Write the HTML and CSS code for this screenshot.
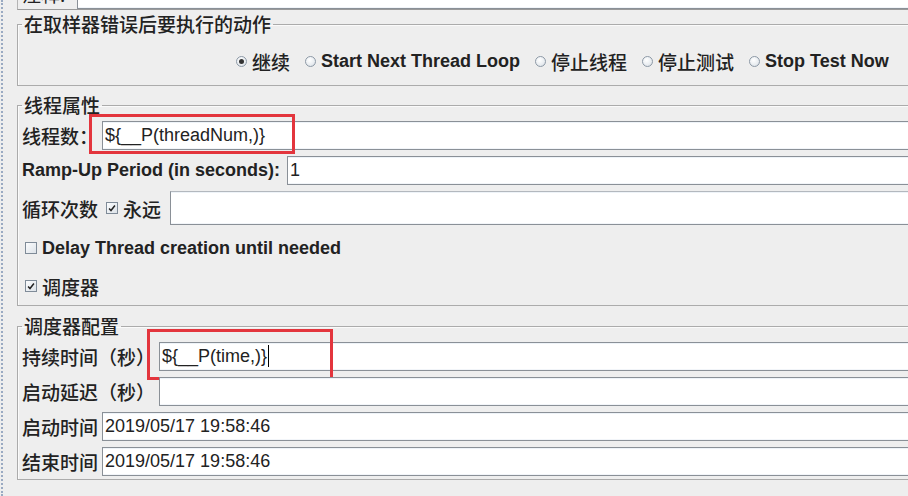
FILE: index.html
```html
<!DOCTYPE html>
<html>
<head>
    <meta charset="utf-8">
    <title>线程组</title>
    <link rel="stylesheet" href="styles.css">
</head>
<body>
    <div class="frame">
        <div class="content">
            <div class="comment-row">
                <span class="comment-label">注释:</span>
                <div class="field comment-field"></div>
            </div>

            <fieldset class="group group-error">
                <legend>在取样器错误后要执行的动作</legend>
                <div class="radio-row">
                    <label class="radio-item"><span class="radio checked"></span><span class="cjk">继续</span></label>
                    <label class="radio-item"><span class="radio"></span><b>Start Next Thread Loop</b></label>
                    <label class="radio-item"><span class="radio"></span><span class="cjk">停止线程</span></label>
                    <label class="radio-item"><span class="radio"></span><span class="cjk">停止测试</span></label>
                    <label class="radio-item"><span class="radio"></span><b>Stop Test Now</b></label>
                </div>
            </fieldset>

            <fieldset class="group group-thread">
                <legend>线程属性</legend>
                <div class="form-row">
                    <span class="cjk">线程数：</span>
                    <div class="field">${__P(threadNum,)}</div>
                    <span class="mark mark-threads"></span>
                </div>
                <div class="form-row ramp-row">
                    <b>Ramp-Up Period (in seconds):</b>
                    <div class="field">1</div>
                </div>
                <div class="form-row loop-row">
                    <span class="cjk loop-label">循环次数</span>
                    <span class="checkbox checked"><svg viewBox="0 0 12 12"><path d="M2.5 6.5 L4.8 9 L9.5 3"/></svg></span>
                    <span class="cjk forever">永远</span>
                    <div class="field tall"></div>
                </div>
                <div class="check-row delay-row">
                    <span class="checkbox"></span>
                    <b>Delay Thread creation until needed</b>
                </div>
                <div class="check-row scheduler-row">
                    <span class="checkbox checked"><svg viewBox="0 0 12 12"><path d="M2.5 6.5 L4.8 9 L9.5 3"/></svg></span>
                    <span class="cjk">调度器</span>
                </div>
            </fieldset>

            <fieldset class="group group-schedule">
                <legend>调度器配置</legend>
                <div class="form-row">
                    <span class="cjk">持续时间（秒）</span>
                    <div class="field">${__P(time,)}<span class="caret"></span></div>
                    <span class="mark mark-time"></span>
                </div>
                <div class="form-row">
                    <span class="cjk">启动延迟（秒）</span>
                    <div class="field"></div>
                </div>
                <div class="form-row">
                    <span class="cjk">启动时间</span>
                    <div class="field">2019/05/17 19:58:46</div>
                </div>
                <div class="form-row">
                    <span class="cjk">结束时间</span>
                    <div class="field">2019/05/17 19:58:46</div>
                </div>
            </fieldset>
        </div>
    </div>
</body>
</html>
```

FILE: styles.css
```css
* {
    box-sizing: border-box;
}

body {
    margin: 0;
    height: 496px;
    overflow: hidden;
    background: #eeeeee;
    color: #222;
    font-family: 'Liberation Sans', 'Noto Sans CJK SC', sans-serif;
    font-size: 18px;
}

.frame {
    margin-left: 1px;
    min-height: 496px;
    border-left: 2px dotted #9aaac2;
}

.content {
    width: 1000px;
    padding-left: 14px;
}

.cjk,
legend {
    font-family: 'Noto Sans CJK SC', sans-serif;
    font-size: 19px;
    font-weight: 500;
}

b {
    font-weight: 700;
}

/* top comment row, scrolled mostly out of view */
.comment-row {
    display: flex;
    align-items: flex-end;
    height: 10px;
    overflow: hidden;
    border-left: 1px solid #b4b4b4;
    border-bottom: 1px solid #9a9a9a;
}

.comment-label {
    font-family: 'Noto Sans CJK SC', sans-serif;
    font-size: 19px;
    line-height: 22px;
    margin: 0 0 -1px 4px;
    width: 55px;
    flex-shrink: 0;
    align-self: flex-start;
    margin-top: -17px;
}

.comment-field {
    flex: 1;
    height: 30px;
    border-bottom: none;
}

/* titled borders */
.group {
    margin: 0;
    min-width: 0;
    border: 1px solid #ababab;
    box-shadow: inset 1px 1px 0 #fafafa;
    padding: 0 0 0 4px;
}

legend {
    padding: 0 2px;
    line-height: 22px;
    color: #222;
}

.group-error {
    margin-top: 3px;
    padding-top: 15px;
    padding-bottom: 13px;
}

.group-thread {
    margin-top: 8px;
    padding-top: 5px;
    padding-bottom: 8px;
}

.group-schedule {
    margin-top: 9px;
    padding-top: 5px;
    padding-bottom: 3px;
}

/* radio buttons */
.radio-row {
    display: flex;
    align-items: center;
    gap: 15px;
    height: 22px;
    margin-left: 214px;
}

.radio-item {
    display: flex;
    align-items: center;
    gap: 5px;
    white-space: nowrap;
}

.radio {
    width: 11px;
    height: 11px;
    border-radius: 50%;
    border: 1px solid #8d99a6;
    background: radial-gradient(circle at 40% 35%, #ffffff 0%, #e8ecf0 60%, #cfd6dd 100%);
    position: relative;
}

.radio.checked::after {
    content: "";
    position: absolute;
    left: 2px;
    top: 2px;
    width: 5px;
    height: 5px;
    border-radius: 50%;
    background: #333;
}

/* text fields */
.form-row {
    display: flex;
    align-items: center;
    gap: 4px;
    position: relative;
    white-space: nowrap;
}

.form-row + .form-row {
    margin-top: 6px;
}

.ramp-row {
    gap: 7px;
}

.field {
    flex: 1;
    height: 29px;
    line-height: 27px;
    padding-left: 2px;
    background: #fff;
    border: 1px solid #8a9097;
    box-shadow: inset 0 1px 0 #eef3f8, inset 0 -1px 0 #f2f5f9;
    font-family: 'Liberation Sans', sans-serif;
    font-size: 18px;
    color: #222;
}

.field.tall {
    height: 34px;
    border-top-color: #b3b8be;
}

.caret {
    display: inline-block;
    width: 1px;
    height: 22px;
    margin-left: 1px;
    vertical-align: -5px;
    background: #000;
}

/* loop count row */
.loop-label {
    margin-right: 4px;
}

.loop-row .checkbox {
    margin-right: 1px;
}

.forever {
    margin-right: 5px;
}

/* checkboxes */
.checkbox {
    width: 12px;
    height: 12px;
    flex-shrink: 0;
    border: 1px solid #7f8b98;
    background: linear-gradient(135deg, #fbfcfd 0%, #dde3e9 100%);
    display: inline-flex;
}

.checkbox svg {
    width: 10px;
    height: 10px;
}

.checkbox path {
    fill: none;
    stroke: #222;
    stroke-width: 1.8;
}

.check-row {
    display: flex;
    align-items: center;
    gap: 5px;
    height: 22px;
    padding-left: 3px;
}

.delay-row {
    margin-top: 12px;
}

.scheduler-row {
    margin-top: 16px;
}

/* red annotation boxes drawn over the form */
.mark {
    position: absolute;
    border: 3px solid #e3353d;
    pointer-events: none;
}

.mark-threads {
    left: 67px;
    top: -7px;
    width: 206px;
    height: 40px;
}

.mark-time {
    left: 125px;
    top: -13px;
    width: 186px;
    height: 51px;
}
```
